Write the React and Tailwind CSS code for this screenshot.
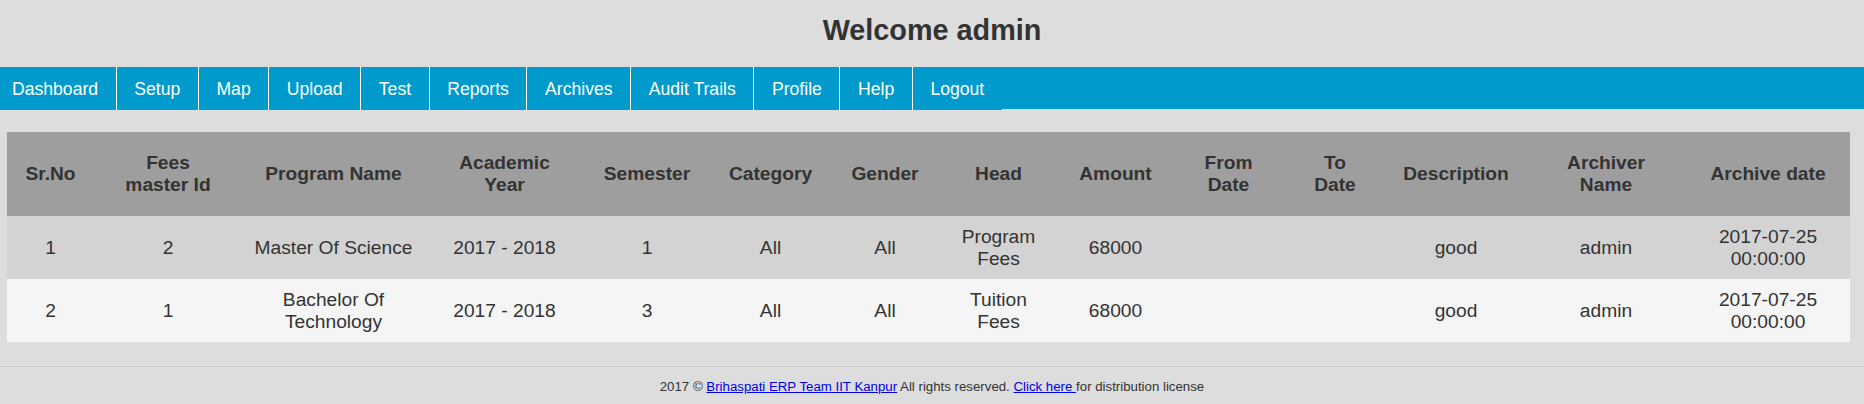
import React from "react";

const navItems = ["Dashboard", "Setup", "Map", "Upload", "Test", "Reports", "Archives", "Audit Trails", "Profile", "Help", "Logout"];

const colWidths = [87, 148, 183, 159, 126, 121, 108, 119, 115, 111, 102, 140, 160, 164];

const headers = [
  ["Sr.No"],
  ["Fees", "master Id"],
  ["Program Name"],
  ["Academic", "Year"],
  ["Semester"],
  ["Category"],
  ["Gender"],
  ["Head"],
  ["Amount"],
  ["From", "Date"],
  ["To", "Date"],
  ["Description"],
  ["Archiver", "Name"],
  ["Archive date"],
];

const rows = [
  {
    bg: "bg-[#d3d3d3]",
    cells: [["1"], ["2"], ["Master Of Science"], ["2017 - 2018"], ["1"], ["All"], ["All"], ["Program", "Fees"], ["68000"], [""], [""], ["good"], ["admin"], ["2017-07-25", "00:00:00"]],
  },
  {
    bg: "bg-[#f5f5f5]",
    cells: [["2"], ["1"], ["Bachelor Of", "Technology"], ["2017 - 2018"], ["3"], ["All"], ["All"], ["Tuition", "Fees"], ["68000"], [""], [""], ["good"], ["admin"], ["2017-07-25", "00:00:00"]],
  },
];

function Lines({ parts }) {
  return parts.map((p, i) => (
    <React.Fragment key={i}>
      {i > 0 && <br />}
      {p}
    </React.Fragment>
  ));
}

export default function App() {
  return (
    <div className="min-h-screen bg-[#dddddd] font-['Liberation_Sans',Arial,sans-serif] text-[#333333]">
      <header className="h-[67px] pt-[14px]">
        <h1 className="text-center text-[28.8px] font-bold leading-[33px] text-[#333333]">Welcome admin</h1>
      </header>

      <nav className="h-[42px] bg-[#009bcc]">
        <ul className="flex h-[43px]">
          {navItems.map((item, i) => (
            <li
              key={item}
              className={`flex h-[43px] items-center bg-[#009bcc] text-[17.6px] leading-[20px] text-white ${
                i === 0 ? "pl-[12px]" : "pl-[17.6px]"
              } pr-[17.6px] ${i < navItems.length - 1 ? "border-r border-white" : ""}`}
            >
              {item}
            </li>
          ))}
        </ul>
      </nav>

      <div className="pl-[7px] pt-[23px]">
        <table className="w-[1843px] table-fixed border-collapse text-center text-[19.2px] leading-[22px]">
          <colgroup>
            {colWidths.map((w, i) => (
              <col key={i} style={{ width: w }} />
            ))}
          </colgroup>
          <thead>
            <tr className="bg-[#9e9e9e]">
              {headers.map((h, i) => (
                <th key={i} className="px-2 py-[20px] font-bold text-[#333333]">
                  <Lines parts={h} />
                </th>
              ))}
            </tr>
          </thead>
          <tbody>
            {rows.map((r, ri) => (
              <tr key={ri} className={r.bg}>
                {r.cells.map((c, ci) => (
                  <td key={ci} className="px-2 py-[9.5px] align-middle text-[#333333]">
                    <Lines parts={c} />
                  </td>
                ))}
              </tr>
            ))}
          </tbody>
        </table>
      </div>

      <footer className="mt-[24px] border-t border-[#cccccc] py-[12px] text-center text-[13.25px] leading-[15px] text-[#333333]">
        2017 © <a href="#" className="text-[#0000ee] underline">Brihaspati ERP Team IIT Kanpur</a> All rights reserved.{" "}
        <a href="#" className="text-[#0000ee] underline">Click here </a>for distribution license
      </footer>
    </div>
  );
}
